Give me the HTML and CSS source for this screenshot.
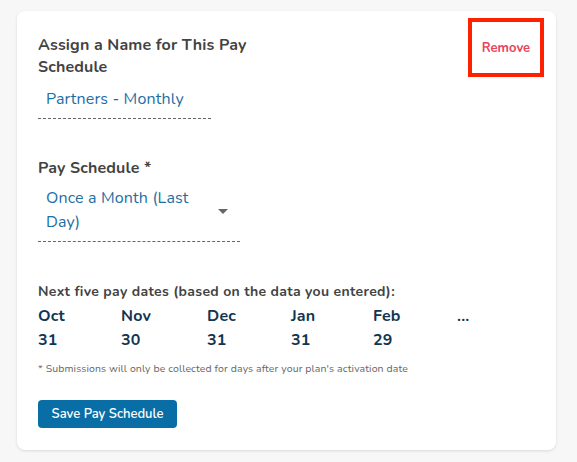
FILE: index.html
```html
<!DOCTYPE html>
<html>
<head>
<meta charset="utf-8">
<link rel="stylesheet" href="styles.css">
</head>
<body>
<div class="card">
  <div class="top">
    <div class="field name-field">
      <div class="label">Assign a Name for This Pay Schedule</div>
      <div class="input">Partners - Monthly</div>
    </div>
    <div class="remove-box"><span class="remove">Remove</span></div>
  </div>
  <div class="field sched-field">
    <div class="label">Pay Schedule *</div>
    <div class="select">
      <span class="select-text">Once a Month (Last Day)</span>
      <span class="arrow"></span>
    </div>
  </div>
  <div class="dates-title">Next five pay dates (based on the data you entered):</div>
  <div class="dates">
    <div class="col"><div>Oct</div><div>31</div></div>
    <div class="col"><div>Nov</div><div>30</div></div>
    <div class="col"><div>Dec</div><div>31</div></div>
    <div class="col"><div>Jan</div><div>31</div></div>
    <div class="col"><div>Feb</div><div>29</div></div>
    <div class="col"><div>...</div></div>
  </div>
  <div class="note">* Submissions will only be collected for days after your plan's activation date</div>
  <button class="save">Save Pay Schedule</button>
</div>
</body>
</html>
```
FILE: styles.css
```css
html, body { margin: 0; padding: 0; }
body {
  background: #f7f7f7;
  font-family: "Nunito", Lato, "Open Sans", sans-serif;
  width: 577px;
  height: 462px;
  padding: 11px 21px 0 17px;
  box-sizing: border-box;
}
.card {
  background: #fff;
  border-radius: 8px;
  box-shadow: 0 1px 3px rgba(0,0,0,0.12);
  padding: 23px 12px 21px 21px;
  height: 439px;
  box-sizing: border-box;
  position: relative;
}
.top { display: flex; justify-content: space-between; }
.label {
  font-weight: 700;
  font-size: 16px;
  line-height: 22px;
  letter-spacing: 0.15px;
  color: #434343;
}
.name-field { width: 240px; }
.name-field .label { width: 232px; }
.input {
  margin-top: 9px;
  width: 173px;
  box-sizing: border-box;
  padding: 0 0 7px 8px;
  font-size: 16px;
  line-height: 24px;
  letter-spacing: 0.15px;
  color: #1c6ea4;
  border-bottom: 1px dashed #666;
}
.remove-box {
  margin-top: -16px;
  width: 76px;
  height: 59px;
  box-sizing: border-box;
  border: 4px solid #ff2000;
  display: flex;
  align-items: center;
  justify-content: center;
}
.remove {
  color: #e8455c;
  font-size: 13px;
  font-weight: 700;
}
.sched-field { margin-top: 38px; }
.select {
  margin-top: 7px;
  width: 202px;
  box-sizing: border-box;
  padding: 0 0 7px 8px;
  border-bottom: 1px dashed #666;
  display: flex;
  align-items: center;
  justify-content: space-between;
}
.select-text {
  width: 160px;
  font-size: 16px;
  line-height: 24px;
  letter-spacing: 0.15px;
  color: #1c6ea4;
}
.arrow {
  width: 0; height: 0;
  border-left: 5px solid transparent;
  border-right: 5px solid transparent;
  border-top: 5px solid #666;
  margin-right: 12px;
  margin-top: 2px;
}
.dates-title {
  margin-top: 40px;
  font-size: 14px;
  font-weight: 700;
  line-height: 20px;
  letter-spacing: 0.32px;
  color: #434343;
}
.dates { display: flex; margin-top: 2px; }
.col {
  width: 84px;
  font-size: 16px;
  font-weight: 700;
  line-height: 24px;
  letter-spacing: 0.2px;
  color: #0f3652;
}
.col:nth-child(1) { width: 83px; }
.col:nth-child(2) { width: 86px; }
.col:nth-child(3) { width: 84px; }
.col:nth-child(4) { width: 82px; }
.col:nth-child(5) { width: 84px; }
.note {
  margin-top: 10px;
  font-size: 10.5px;
  line-height: 14px;
  letter-spacing: 0.12px;
  color: #666;
}
.save {
  margin-top: 24px;
  display: block;
  background: #0a6ea6;
  color: #fff;
  border: none;
  border-radius: 4px;
  width: 139px;
  height: 28px;
  font-family: inherit;
  font-size: 13px;
  font-weight: 600;
  padding: 0;
}
```
